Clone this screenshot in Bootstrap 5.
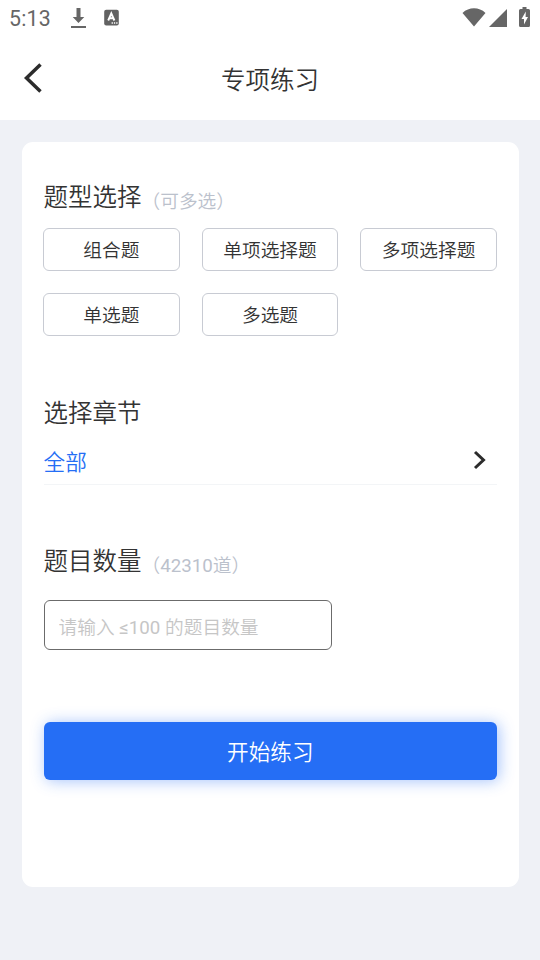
<!DOCTYPE html>
<html lang="zh-CN">
<head>
<meta charset="utf-8">
<meta name="viewport" content="width=device-width, initial-scale=1">
<title>专项练习</title>
<link href="https://cdn.jsdelivr.net/npm/bootstrap@5.3.0/dist/css/bootstrap.min.css" rel="stylesheet">
<style>
body{font-family:Roboto,"Noto Sans CJK SC DemiLight","Noto Sans CJK SC",sans-serif;background:#eff1f6;color:#333;min-height:960px;overflow:hidden}
svg{display:block;flex:none}
.status-bar{height:37px;padding:0 9px;color:#666}
.clock{font-size:21.3px;line-height:37px;letter-spacing:.2px;width:61px}
.status-bar svg{margin-bottom:2px}
.title-bar{height:83px;padding:0 23px}
.title-bar h1{font-size:24.48px;line-height:36px;padding-top:4px;font-weight:350}
.back{width:20px;margin-bottom:2px}
.panel{margin:21.600px 21.400px 0 22px;padding:38px 21.600px 0;height:745.600px;border-radius:11px}
.sec-title{font-size:24.48px;line-height:36px;height:36px;font-weight:350}
.sec-note{font-size:18.72px;line-height:28px;height:36px;color:#bbc1cc;padding-top:8px}
.chips{display:grid;grid-template-columns:repeat(3,136.8px);justify-content:space-between;row-gap:21.8px;margin:12.400px 0 0 -.600px}
.chip{height:43.2px;padding:2px 0 0;border:1px solid #c8cbd3;border-radius:6px;font-size:18.72px;line-height:41px;color:#333;font-weight:350}
.chapter{margin-top:59.5px}
.picker{height:42px;margin-top:11px;border-bottom:1.5px solid #f3f5f7;padding-right:11px}
.picker span{font-size:21.6px;line-height:39px;color:#256ef5;font-weight:350}
.picker svg{margin-top:7px}
.amount{margin-top:59.600px}
.count-input{width:288px;height:50.4px;margin-top:19.4px;padding:6px 14px 0;border:1px solid #6b6b6b;border-radius:6px;font-size:18.72px;color:#333}
.count-input::placeholder{color:#c6c6c6;opacity:1}
.start{height:57.6px;margin-top:72px;padding:4px 0 0;border:0;border-radius:6px;background:#256ef5;font-size:21.6px;font-weight:350;color:#fff;box-shadow:2px 1px 15px rgba(37,110,245,.42)}
</style>
</head>
<body>
<header class="bg-white">
  <div class="status-bar d-flex align-items-center">
    <span class="clock">5:13</span>
    <svg width="17" height="22" viewBox="0 0 17 22" fill="#666"><path d="M6.500 1h4v9h3.800l-5.800 6L2.700 10h3.800zM1 19h15v2H1z"/></svg>
    <svg class="ms-3" width="17" height="17" viewBox="0 0 17 17"><rect x="1.200" y=".8" width="14.600" height="15.600" rx="2" fill="#626262"/><path d="M5.200 11.500 8.300 4.300l3.100 7.200M6.300 9.300h4" fill="none" stroke="#fff" stroke-width="1.900"/><path d="M8.600 14h1.300m1 0h1.300m1 0h1.300" stroke="#fff" stroke-width="1.300"/></svg>
    <svg class="ms-auto" width="70" height="24" viewBox="461 6 70 24" fill="#666"><path d="M462.500 13C469 6.800 479 6.800 485.500 13L474 26.500zM507 9v18h-18zM522.500 7h4v2h2q1.500 0 1.500 1.500v15q0 1.500-1.500 1.500h-8q-1.500 0-1.500-1.500v-15q0-1.500 1.500-1.500h2z"/><path d="m525.800 11.500-4.300 7.500h2.500v5.500l4-7.500h-2.400z" fill="#fff"/></svg>
  </div>
  <div class="title-bar d-flex align-items-center justify-content-between">
    <svg class="back" width="20" height="32" viewBox="0 0 20 32" fill="none" stroke="#2c2c2c" stroke-width="3.500"><path d="M17.500 2.500 3.500 16l14 13.500"/></svg>
    <h1 class="m-0">专项练习</h1>
    <span class="back"></span>
  </div>
</header>
<main class="panel bg-white">
  <section>
    <div class="d-flex"><h2 class="sec-title m-0">题型选择</h2><span class="sec-note">（可多选）</span></div>
    <div class="chips">
      <button class="btn chip">组合题</button>
      <button class="btn chip">单项选择题</button>
      <button class="btn chip">多项选择题</button>
      <button class="btn chip">单选题</button>
      <button class="btn chip">多选题</button>
    </div>
  </section>
  <section class="chapter">
    <h2 class="sec-title m-0">选择章节</h2>
    <div class="picker d-flex justify-content-between">
      <span>全部</span>
      <svg width="13" height="20" viewBox="0 0 13 20" fill="none" stroke="#2c2c2c" stroke-width="3"><path d="m2 2 8.500 8L2 18"/></svg>
    </div>
  </section>
  <section class="amount">
    <div class="d-flex"><h2 class="sec-title m-0">题目数量</h2><span class="sec-note">（42310道）</span></div>
    <input class="form-control count-input" type="text" placeholder="请输入 ≤100 的题目数量">
  </section>
  <button class="btn start w-100">开始练习</button>
</main>
<script src="https://cdn.jsdelivr.net/npm/bootstrap@5.3.0/dist/js/bootstrap.bundle.min.js"></script>
</body>
</html>
